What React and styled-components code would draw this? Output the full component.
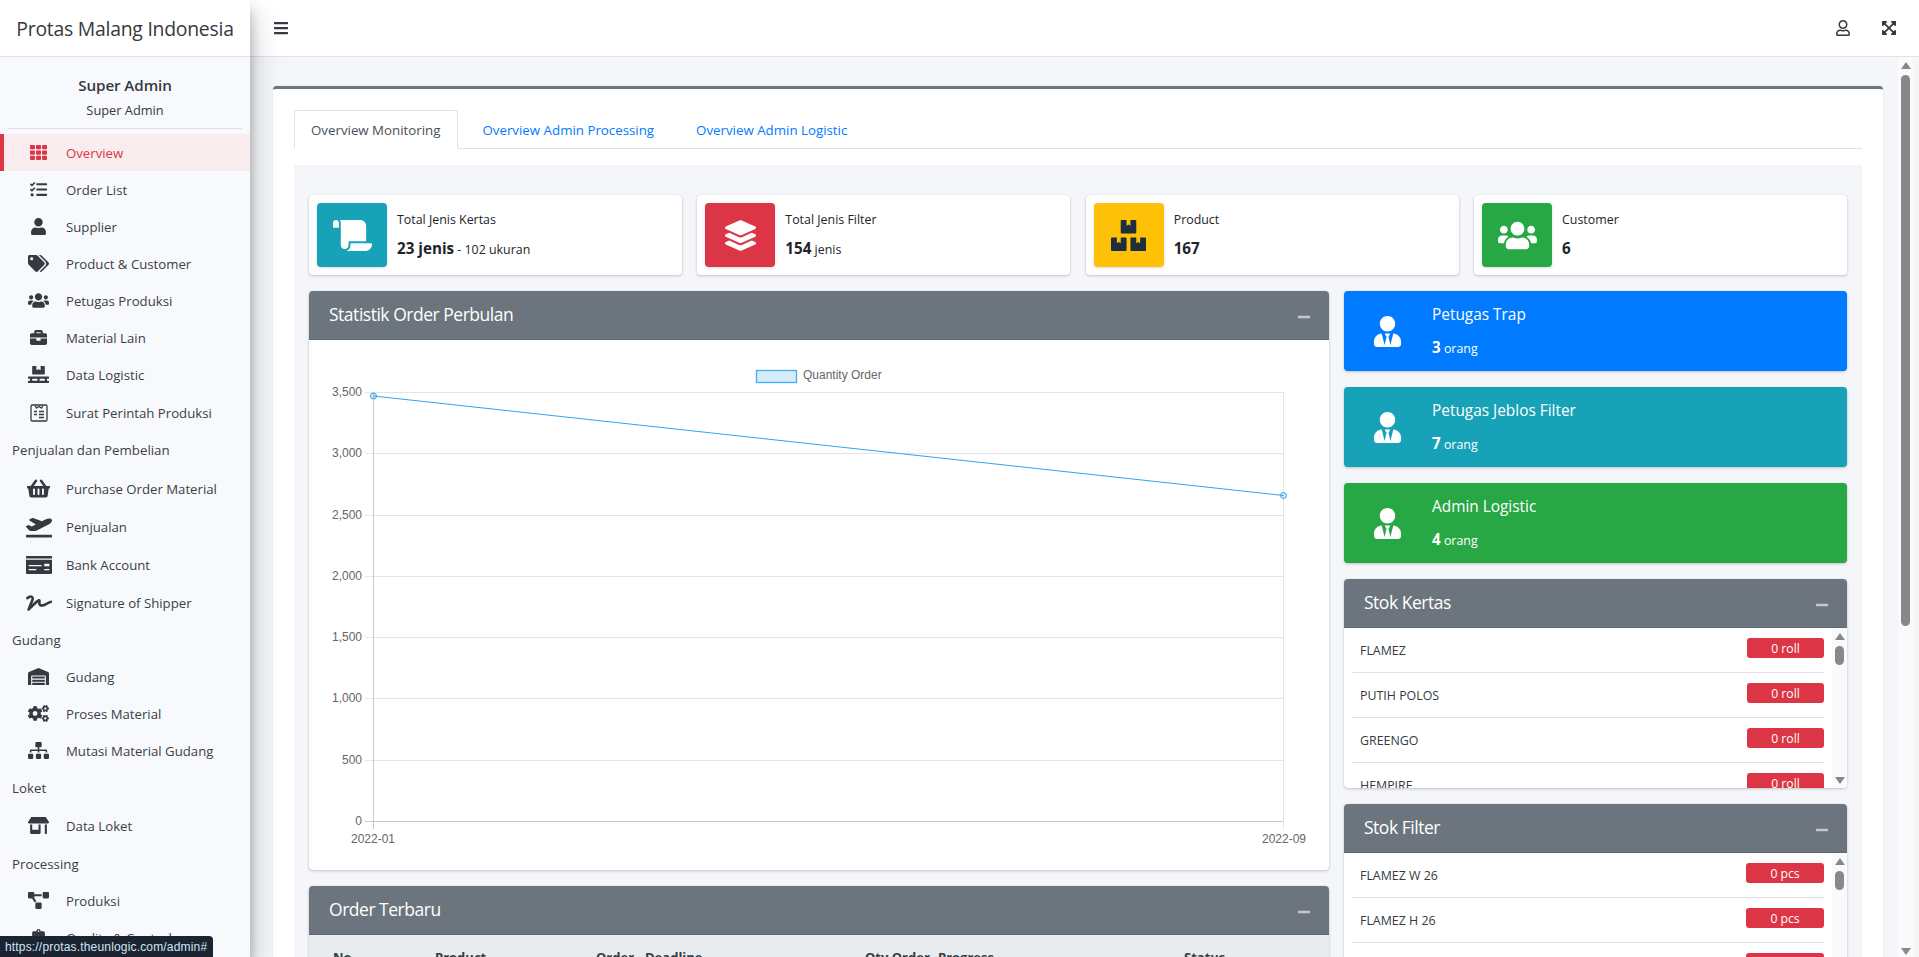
import React from 'react';
import styled, { createGlobalStyle } from 'styled-components';
import {
  FaTh, FaTasks, FaUser, FaTags, FaUsers, FaBriefcase, FaPallet, FaShoppingBasket,
  FaPlaneDeparture, FaMoneyCheck, FaSignature, FaWarehouse, FaCogs, FaSitemap, FaStoreAlt,
  FaProjectDiagram, FaClipboardCheck, FaBars, FaRegUser, FaExpandArrowsAlt, FaScroll, FaLayerGroup,
  FaBoxes, FaUserTie, FaMinus,
} from 'react-icons/fa';

const FONT = '"Open Sans", "Noto Sans", sans-serif';

const Global = createGlobalStyle`
  html, body { margin: 0; padding: 0; height: 100%; overflow: hidden; }
  body { font-family: ${FONT}; font-size: 13px; color: #212529; background: #f4f6f9; }
  * { box-sizing: border-box; }
  #root { height: 100%; }
`;

const Page = styled.div`
  display: flex;
  width: 1919px;
  height: 957px;
  overflow: hidden;
  position: relative;
`;

const Sidebar = styled.aside`
  width: 250px;
  flex: none;
  height: 957px;
  overflow: hidden;
  background: #f8f9fc;
  box-shadow: 0 14px 28px rgba(0,0,0,.25), 0 10px 10px rgba(0,0,0,.22);
  position: relative;
  z-index: 3;
`;

const Brand = styled.div`
  height: 57px;
  background: #fff;
  border-bottom: 1px solid #dee2e6;
  display: flex;
  align-items: center;
  justify-content: center;
  font-size: 19.4px;
  letter-spacing: -.25px;
  color: #343a40;
  white-space: nowrap;
`;

const UserPanel = styled.div`
  margin: 0 8px 5px;
  height: 72px;
  padding-top: 18px;
  border-bottom: 1px solid #dee2e6;
  text-align: center;
`;

const UserName = styled.div`
  font-size: 15.2px;
  font-weight: 600;
  letter-spacing: -.1px;
  color: #343a40;
  line-height: 20px;
`;

const UserRole = styled.div`
  font-size: 12.8px;
  color: #343a40;
  line-height: 20px;
  margin-top: 5px;
`;

const NavItem = styled.a`
  display: flex;
  align-items: center;
  height: ${(p) => p.$h || 37}px;
  padding-top: ${(p) => p.$pt || 0}px;
  border-left: 4px solid ${(p) => (p.$active ? '#dc3545' : 'transparent')};
  background: ${(p) => (p.$active ? '#f8ecee' : 'transparent')};
  color: ${(p) => (p.$active ? '#dc3545' : '#3a3f45')};
  font-size: 13.2px;
  white-space: nowrap;
`;

const NavIcon = styled.span`
  width: 62px;
  flex: none;
  display: flex;
  justify-content: center;
  padding-left: 7px;
  font-size: ${(p) => p.$size || 17}px;
  color: ${(p) => (p.$active ? '#dc3545' : '#343a40')};
  svg { display: block; }
`;

const NavHeading = styled.div`
  height: 37px;
  padding-left: 12px;
  display: flex;
  align-items: center;
  font-size: 13.3px;
  color: #3a3f45;
  white-space: nowrap;
`;

const Main = styled.div`
  flex: 1;
  min-width: 0;
  display: flex;
  flex-direction: column;
`;

const Topbar = styled.header`
  height: 57px;
  flex: none;
  background: #fff;
  border-bottom: 1px solid #dee2e6;
  display: flex;
  align-items: center;
  padding: 0 22px 0 23px;
  color: #343a40;
  font-size: 16px;
`;

const TopRight = styled.div`
  margin-left: auto;
  display: flex;
  gap: 30px;
`;

const Content = styled.main`
  flex: 1;
  min-height: 0;
  overflow: hidden;
  display: flex;
  padding: 29px 0 0 23px;
`;

const Scroll = styled.div`
  width: 1610px;
  flex: none;
  overflow: hidden;
  background: #fff;
  border-top: 3px solid #6c757d;
  border-radius: 4px 4px 0 0;
  box-shadow: 0 0 1px rgba(0,0,0,.3);
  padding: 21px 21px 0;
  height: 900px;
`;

const ScrollBar = styled.div`
  width: 15px;
  margin-left: 15px;
  margin-top: -29px;
  height: 900px;
  padding-top: 5px;
  flex: none;
  background: #fafafa;
  display: flex;
  flex-direction: column;
  align-items: center;
`;

const Thumb = styled.div`
  width: 9px;
  height: ${(p) => p.$h}px;
  margin-top: 6px;
  background: #888;
  border-radius: 5px;
  flex: none;
`;

const Arrow = styled.div`
  width: 0;
  height: 0;
  flex: none;
  margin-top: ${(p) => p.$top || 0}px;
  border-left: 5px solid transparent;
  border-right: 5px solid transparent;
  ${(p) => (p.$down ? 'border-top: 7px solid #888;' : 'border-bottom: 7px solid #888;')}
`;

const Tabs = styled.nav`
  display: flex;
  gap: 8px;
  height: 39px;
  border-bottom: 1px solid #dee2e6;
`;

const Tab = styled.a`
  display: flex;
  align-items: center;
  padding: 0 ${(p) => (p.$active ? 17 : 16)}px 0 16px;
  margin-left: ${(p) => (p.$second ? -1 : 0)}px;
  height: 39px;
  font-size: 13.3px;
  color: ${(p) => (p.$active ? '#495057' : '#007bff')};
  background: ${(p) => (p.$active ? '#fff' : 'transparent')};
  border: 1px solid ${(p) => (p.$active ? '#dee2e6' : 'transparent')};
  border-bottom-color: ${(p) => (p.$active ? '#fff' : 'transparent')};
  border-radius: 4px 4px 0 0;
`;

const Panel = styled.section`
  margin-top: 16px;
  background: #f4f6f9;
  padding: 30px 15px 0;
  height: 800px;
  overflow: hidden;
`;

const StatRow = styled.div`
  display: grid;
  grid-template-columns: repeat(4, 1fr);
  column-gap: 15.4px;
  margin-bottom: 16px;
`;

const StatBox = styled.div`
  height: 80px;
  background: #fff;
  border-radius: 4px;
  box-shadow: 0 0 1px rgba(0,0,0,.125), 0 1px 3px rgba(0,0,0,.2);
  padding: 8px;
  display: flex;
`;

const StatIcon = styled.div`
  width: 70px;
  height: 64px;
  flex: none;
  border-radius: 4px;
  background: ${(p) => p.$bg};
  color: ${(p) => p.$fg || '#fff'};
  box-shadow: 0 1px 3px rgba(0,0,0,.15);
  display: flex;
  align-items: center;
  justify-content: center;
  font-size: ${(p) => p.$size}px;
`;

const StatBody = styled.div`
  padding: 8px 0 0 10px;
  display: flex;
  flex-direction: column;
`;

const StatLabel = styled.div`
  font-size: 12.4px;
  line-height: 18px;
  color: #212529;
`;

const StatValue = styled.div`
  margin-top: 9px;
  font-size: 12.4px;
  line-height: 20px;
  color: #212529;
  b { font-size: 15.2px; font-weight: 700; }
`;

const Columns = styled.div`
  display: flex;
  gap: 15px;
  align-items: flex-start;
`;

const LeftCol = styled.div`
  width: 1020px;
  flex: none;
  display: flex;
  flex-direction: column;
  gap: 16px;
`;

const RightCol = styled.div`
  width: 503px;
  flex: none;
  display: flex;
  flex-direction: column;
  gap: 16px;
`;

const Card = styled.div`
  background: #fff;
  border-radius: 4px;
  box-shadow: 0 0 1px rgba(0,0,0,.125), 0 1px 3px rgba(0,0,0,.2);
  overflow: hidden;
`;

const CardHead = styled.div`
  height: 49px;
  background: #6c757d;
  border-bottom: 1px solid #60686f;
  color: #fff;
  display: flex;
  align-items: center;
  justify-content: space-between;
  padding: 0 18px 2px 20px;
  font-size: 17.5px;
  letter-spacing: -.48px;
`;

const Collapse = styled.span`
  color: #c4c8cb;
  font-size: 14px;
  display: flex;
  padding-top: 6px;
`;

const ChartWrap = styled.div`
  height: 530px;
  svg { display: block; }
`;

const ColorBox = styled.div`
  height: 80px;
  border-radius: 4px;
  background: ${(p) => p.$bg};
  color: #fff;
  box-shadow: 0 0 1px rgba(0,0,0,.125), 0 1px 3px rgba(0,0,0,.2);
  display: flex;
  align-items: center;
`;

const ColorIcon = styled.div`
  width: 88px;
  flex: none;
  display: flex;
  justify-content: center;
  padding-right: 2px;
  font-size: 31px;
`;

const ColorBody = styled.div`
  display: flex;
  flex-direction: column;
  padding-top: 1px;
`;

const ColorTitle = styled.div`
  font-size: 15.4px;
  line-height: 20px;
`;

const ColorValue = styled.div`
  margin-top: 12px;
  font-size: 12.4px;
  line-height: 20px;
  b { font-size: 15.2px; font-weight: 700; }
`;

const StockBody = styled.div`
  position: relative;
  display: flex;
  overflow: hidden;
  height: ${(p) => p.$h}px;
`;

const StockList = styled.ul`
  list-style: none;
  margin: 0;
  padding: 0 0 0 8px;
  flex: 1;
  min-width: 0;
`;

const StockRow = styled.li`
  height: 45px;
  border-bottom: 1px solid #dee2e6;
  display: flex;
  justify-content: space-between;
  padding: 10px 0 0 8px;
  font-size: 12.4px;
  color: #343a40;
  span:first-child { margin-top: 4px; }
`;

const Badge = styled.span`
  width: ${(p) => p.$w}px;
  height: 20px;
  border-radius: 3px;
  background: #dc3545;
  color: #fff;
  font-size: 12.2px;
  font-weight: 500;
  display: flex;
  align-items: center;
  justify-content: center;
`;

const InnerBar = styled.div`
  width: 15px;
  margin-left: 8px;
  flex: none;
  display: flex;
  flex-direction: column;
  align-items: center;
  padding-top: 5px;
  background: #fafafa;
`;

const TableHead = styled.div`
  height: 60px;
  background: #e9ecef;
  position: relative;
  font-weight: 700;
  font-size: 13px;
  color: #343a40;
`;

const TableCell = styled.span`
  position: absolute;
  top: 13px;
  left: ${(p) => p.$x}px;
  white-space: nowrap;
`;

const StatusTip = styled.div`
  position: absolute;
  left: 0;
  bottom: 0;
  height: 21px;
  width: 213px;
  z-index: 10;
  background: #1c2331;
  color: #cfe6f5;
  border-radius: 0 4px 0 0;
  display: flex;
  align-items: center;
  padding-left: 5px;
  font-family: "Liberation Sans", sans-serif;
  font-size: 12px;
  letter-spacing: .17px;
  white-space: nowrap;
`;

const SuratIcon = () => (
  <svg width="1em" height="1em" viewBox="0 0 18 18" fill="none" stroke="currentColor" strokeWidth="1.3">
    <rect x="1" y="1" width="16" height="16" rx="1.2" />
    <path d="M5 1.5 L6.5 4 L9 2.5 L11.5 4 L13 1.5" />
    <path d="M4 7.5h3M9 7.5h5M4 10.5h3M9 10.5h5M9 13.5h5" strokeWidth="1.5" />
  </svg>
);

const nav = [
  { t: 'Overview', I: FaTh, a: true },
  { t: 'Order List', I: FaTasks },
  { t: 'Supplier', I: FaUser },
  { t: 'Product & Customer', I: FaTags, s: 21 },
  { t: 'Petugas Produksi', I: FaUsers, s: 21 },
  { t: 'Material Lain', I: FaBriefcase },
  { t: 'Data Logistic', I: FaPallet, s: 21 },
  { t: 'Surat Perintah Produksi', I: SuratIcon, s: 18, h: 38, pt: 2 },
  { h2: 'Penjualan dan Pembelian' },
  { t: 'Purchase Order Material', I: FaShoppingBasket, s: 23, h: 40, pt: 1 },
  { t: 'Penjualan', I: FaPlaneDeparture, s: 26, h: 38 },
  { t: 'Bank Account', I: FaMoneyCheck, s: 26, h: 38 },
  { t: 'Signature of Shipper', I: FaSignature, s: 26, h: 37 },
  { h2: 'Gudang' },
  { t: 'Gudang', I: FaWarehouse, s: 21 },
  { t: 'Proses Material', I: FaCogs, s: 21 },
  { t: 'Mutasi Material Gudang', I: FaSitemap, s: 21 },
  { h2: 'Loket' },
  { t: 'Data Loket', I: FaStoreAlt, s: 21, h: 39 },
  { h2: 'Processing' },
  { t: 'Produksi', I: FaProjectDiagram, s: 21 },
  { t: 'Quality & Control', I: FaClipboardCheck },
];

const stats = [
  { l: 'Total Jenis Kertas', v: <><b>23 jenis</b> - 102 ukuran</>, I: FaScroll, bg: '#17a2b8', s: 39 },
  { l: 'Total Jenis Filter', v: <><b>154</b> jenis</>, I: FaLayerGroup, bg: '#dc3545', s: 31 },
  { l: 'Product', v: <b>167</b>, I: FaBoxes, bg: '#ffc107', fg: '#1f2d3d', s: 35 },
  { l: 'Customer', v: <b>6</b>, I: FaUsers, bg: '#28a745', s: 39 },
];

const colorBoxes = [
  { t: 'Petugas Trap', n: 3, bg: '#007bff' },
  { t: 'Petugas Jeblos Filter', n: 7, bg: '#17a2b8' },
  { t: 'Admin Logistic', n: 4, bg: '#28a745' },
];

const Chart = () => {
  const L = 373, R = 1283, T = 392, B = 821, ox = 309, oy = 340;
  const grid = [3500, 3000, 2500, 2000, 1500, 1000, 500, 0];
  const y = (v) => B - (v / 3500) * (B - T) - oy;
  const lx = L - ox, rx = R - ox;
  return (
    <svg width="1020" height="530" viewBox="0 0 1020 530" fontFamily="Liberation Sans, Arial, sans-serif" fontSize="12" fill="#666">
      <rect x="447.5" y="30.5" width="40" height="12" fill="rgba(54,162,235,.2)" stroke="rgba(54,162,235,.85)" strokeWidth="1.4" />
      <text x="494" y="39">Quantity Order</text>
      {grid.map((v) => (
        <g key={v}>
          <line x1={lx - 8} x2={rx} y1={Math.round(y(v)) + 0.5} y2={Math.round(y(v)) + 0.5} stroke={v === 0 ? '#c8c8c8' : '#e5e5e5'} />
          <text x={lx - 11} y={y(v) + 4} textAnchor="end">{v.toLocaleString('en-US')}</text>
        </g>
      ))}
      <line x1={lx + 0.5} x2={lx + 0.5} y1={y(3500)} y2={y(0) + 8} stroke="#c8c8c8" />
      <line x1={rx + 0.5} x2={rx + 0.5} y1={y(3500)} y2={y(0) + 8} stroke="#e5e5e5" />
      <text x={lx} y={y(0) + 22} textAnchor="middle">2022-01</text>
      <text x={rx + 1} y={y(0) + 22} textAnchor="middle">2022-09</text>
      <line x1={lx + 0.5} y1={396 - oy} x2={rx + 0.5} y2={495.5 - oy} stroke="#36a2eb" strokeWidth="1" />
      <circle cx={lx + 0.5} cy={396 - oy} r="3" fill="rgba(54,162,235,.2)" stroke="#36a2eb" />
      <circle cx={rx + 0.5} cy={495.5 - oy} r="3" fill="rgba(54,162,235,.2)" stroke="#36a2eb" />
    </svg>
  );
};

const Stock = ({ title, items, unit, w, h }) => (
  <Card>
    <CardHead>{title}<Collapse><FaMinus /></Collapse></CardHead>
    <StockBody $h={h}>
      <StockList>
        {items.map((it) => (
          <StockRow key={it}>
            <span>{it}</span>
            <Badge $w={w}>0 {unit}</Badge>
          </StockRow>
        ))}
      </StockList>
      <InnerBar>
        <Arrow />
        <Thumb $h={19} />
        <Arrow $down $top={112} />
      </InnerBar>
    </StockBody>
  </Card>
);

export default function App() {
  return (
    <Page>
      <Global />
      <Sidebar>
        <Brand>Protas Malang Indonesia</Brand>
        <UserPanel>
          <UserName>Super Admin</UserName>
          <UserRole>Super Admin</UserRole>
        </UserPanel>
        {nav.map((n) =>
          n.h2 ? (
            <NavHeading key={n.h2}>{n.h2}</NavHeading>
          ) : (
            <NavItem key={n.t} $active={n.a} $h={n.h} $pt={n.pt}>
              <NavIcon $active={n.a} $size={n.s}><n.I /></NavIcon>
              {n.t}
            </NavItem>
          )
        )}
      </Sidebar>
      <Main>
        <Topbar>
          <FaBars />
          <TopRight>
            <FaRegUser />
            <FaExpandArrowsAlt />
          </TopRight>
        </Topbar>
        <Content>
          <Scroll>
            <Tabs>
              <Tab $active>Overview Monitoring</Tab>
              <Tab $second>Overview Admin Processing</Tab>
              <Tab>Overview Admin Logistic</Tab>
            </Tabs>
            <Panel>
              <StatRow>
                {stats.map((s) => (
                  <StatBox key={s.l}>
                    <StatIcon $bg={s.bg} $fg={s.fg} $size={s.s}><s.I /></StatIcon>
                    <StatBody>
                      <StatLabel>{s.l}</StatLabel>
                      <StatValue>{s.v}</StatValue>
                    </StatBody>
                  </StatBox>
                ))}
              </StatRow>
              <Columns>
                <LeftCol>
                  <Card>
                    <CardHead>Statistik Order Perbulan<Collapse><FaMinus /></Collapse></CardHead>
                    <ChartWrap><Chart /></ChartWrap>
                  </Card>
                  <Card>
                    <CardHead>Order Terbaru<Collapse><FaMinus /></Collapse></CardHead>
                    <TableHead>
                      <TableCell $x={24}>No</TableCell>
                      <TableCell $x={126}>Product</TableCell>
                      <TableCell $x={287}>Order</TableCell>
                      <TableCell $x={336}>Deadline</TableCell>
                      <TableCell $x={556}>Qty Order</TableCell>
                      <TableCell $x={629}>Progress</TableCell>
                      <TableCell $x={875}>Status</TableCell>
                    </TableHead>
                  </Card>
                </LeftCol>
                <RightCol>
                  {colorBoxes.map((c) => (
                    <ColorBox key={c.t} $bg={c.bg}>
                      <ColorIcon><FaUserTie /></ColorIcon>
                      <ColorBody>
                        <ColorTitle>{c.t}</ColorTitle>
                        <ColorValue><b>{c.n}</b> orang</ColorValue>
                      </ColorBody>
                    </ColorBox>
                  ))}
                  <Stock title="Stok Kertas" items={['FLAMEZ', 'PUTIH POLOS', 'GREENGO', 'HEMPIRE']} unit="roll" w={77} h={160} />
                  <Stock title="Stok Filter" items={['FLAMEZ W 26', 'FLAMEZ H 26', 'GREENGO W 26']} unit="pcs" w={78} h={160} />
                </RightCol>
              </Columns>
            </Panel>
          </Scroll>
          <ScrollBar>
            <Arrow />
            <Thumb $h={551} />
            <Arrow $down $top={322} />
          </ScrollBar>
        </Content>
      </Main>
      <StatusTip>https://protas.theunlogic.com/admin#</StatusTip>
    </Page>
  );
}
